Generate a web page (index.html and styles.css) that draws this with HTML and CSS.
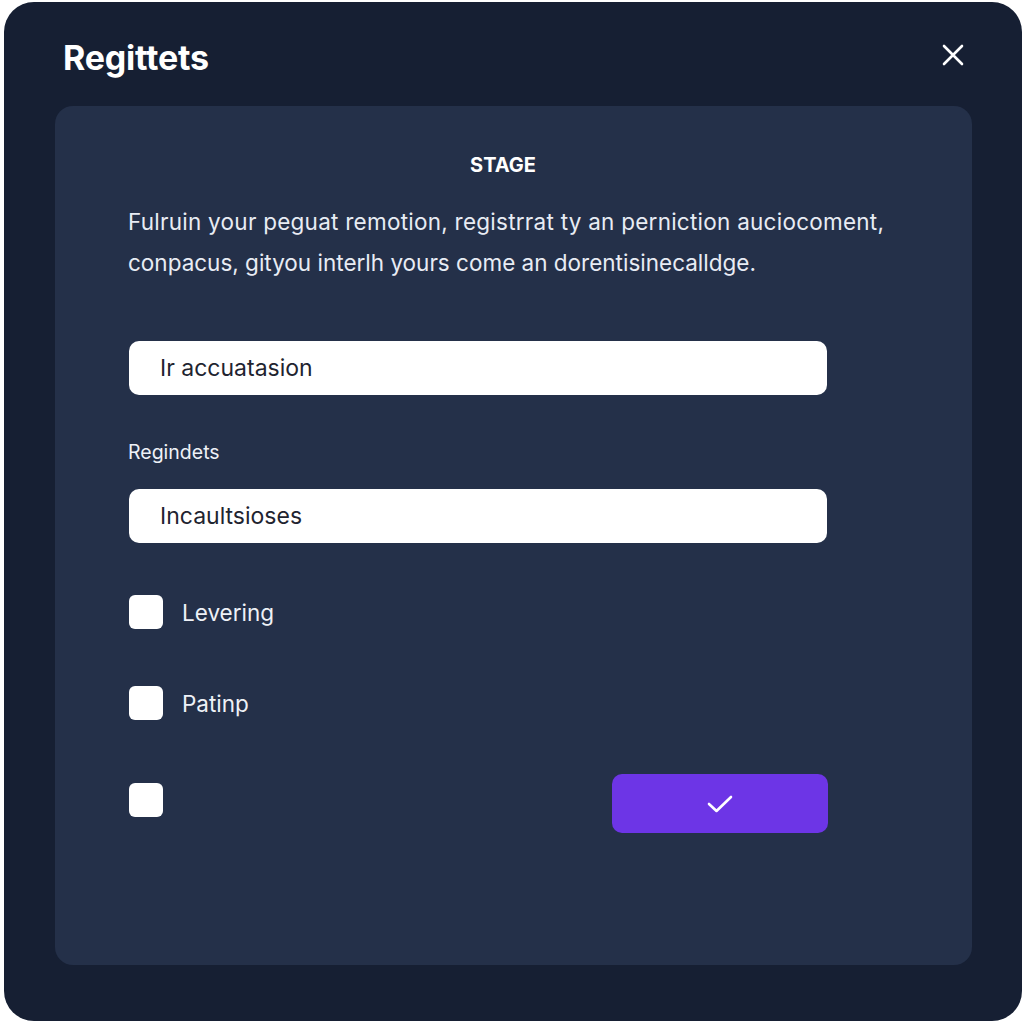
FILE: index.html
```html
<!DOCTYPE html>
<html>
<head>
<meta charset="utf-8">
<link rel="stylesheet" href="styles.css">
</head>
<body>
<div class="dialog">
  <div class="header">
    <h1 class="title">Regittets</h1>
    <button class="close" aria-label="Close">
      <svg width="22" height="22" viewBox="0 0 22 22"><path d="M2 2 L20 20 M20 2 L2 20" stroke="#ffffff" stroke-width="2.6" stroke-linecap="round"/></svg>
    </button>
  </div>
  <div class="panel">
    <div class="stage">STAGE</div>
    <p class="desc"><span class="line1">Fulruin your peguat remotion, registrrat ty an perniction auciocoment,</span><br><span class="line2">conpacus, gityou interlh yours come an dorentisinecalldge.</span></p>
    <div class="field first">Ir accuatasion</div>
    <div class="label">Regindets</div>
    <div class="field">Incaultsioses</div>
    <div class="check-row r1"><span class="box"></span><span class="check-label">Levering</span></div>
    <div class="check-row r2"><span class="box"></span><span class="check-label">Patinp</span></div>
    <div class="last-row">
      <span class="box lift"></span>
      <button class="confirm" aria-label="Confirm">
        <svg width="28" height="22" viewBox="0 0 28 22"><path d="M3 11 L10.5 18 L25 4" fill="none" stroke="#ffffff" stroke-width="2.6" stroke-linecap="round" stroke-linejoin="round"/></svg>
      </button>
    </div>
  </div>
</div>
</body>
</html>
```
FILE: styles.css
```css
html, body {
  margin: 0;
  padding: 0;
  background: #ffffff;
}
body {
  width: 1024px;
  height: 1024px;
  font-family: Inter, "Noto Sans", "Liberation Sans", sans-serif;
}
.dialog {
  box-sizing: border-box;
  margin: 2px 2px 0 4px;
  width: 1018px;
  height: 1019px;
  background: #161f33;
  border-radius: 30px;
  display: flex;
  flex-direction: column;
}
.header {
  height: 104px;
  display: flex;
  align-items: center;
  justify-content: space-between;
  padding: 0 58px 0 59px;
  box-sizing: border-box;
}
.title {
  margin: 0;
  color: #ffffff;
  font-size: 34px;
  font-weight: 700;
  letter-spacing: -0.2px;
  position: relative;
  top: 3px;
}
.close {
  background: none;
  border: 0;
  padding: 0;
  width: 22px;
  height: 22px;
  display: flex;
  position: relative;
  top: 1px;
}
.panel {
  margin: 0 50px 56px 51px;
  flex: 1;
  background: #243049;
  border-radius: 18px;
  padding: 48px 0 0 73px;
  box-sizing: border-box;
  color: #eef1f7;
}
.stage {
  width: 750px;
  text-align: center;
  font-size: 20px;
  font-weight: 700;
  line-height: 22px;
  color: #ffffff;
}
.desc {
  margin: 25px 0 0 0;
  font-size: 22.5px;
  line-height: 41px;
  color: #e8ecf4;
  white-space: nowrap;
}
.line1 {
  letter-spacing: 0.25px;
}
.line2 {
  letter-spacing: 0;
}
.field {
  width: 698px;
  height: 54px;
  margin-left: 1px;
  box-sizing: border-box;
  background: #ffffff;
  border-radius: 10px;
  padding-left: 31px;
  display: flex;
  align-items: center;
  font-size: 23px;
  color: #1f2430;
}
.field.first {
  margin-top: 58px;
}
.label {
  margin: 46px 0 26px 0;
  font-size: 19.5px;
  line-height: 22px;
  color: #eef1f7;
}
.check-row {
  display: flex;
  align-items: center;
  gap: 19px;
  height: 34px;
  margin-left: 1px;
}
.r1 { margin-top: 52px; }
.r2 { margin-top: 57px; }
.box {
  width: 34px;
  height: 34px;
  background: #ffffff;
  border-radius: 6px;
  flex-shrink: 0;
}
.box.lift {
  margin-bottom: 7px;
}
.check-label {
  font-size: 22.5px;
  color: #eef1f7;
}
.last-row {
  margin-top: 54px;
  margin-left: 1px;
  width: 699px;
  display: flex;
  align-items: center;
  justify-content: space-between;
}
.confirm {
  width: 216px;
  height: 59px;
  border: 0;
  border-radius: 10px;
  background: #6d35e6;
  display: flex;
  align-items: center;
  justify-content: center;
  padding: 0;
}
```
